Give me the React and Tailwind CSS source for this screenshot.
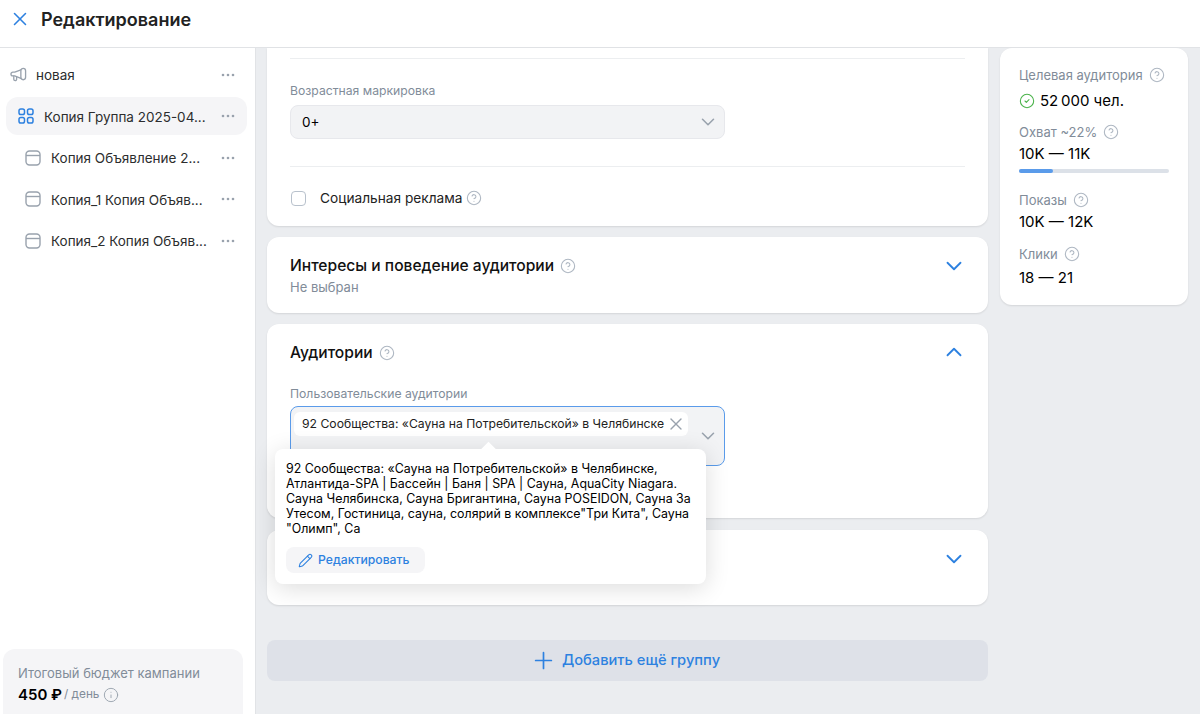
import React from 'react';
import { X, ChevronDown, ChevronUp, CircleHelp, CircleCheck, Pencil, Plus, Info } from 'lucide-react';

const Help = () => (
  <CircleHelp size={16} strokeWidth={1.6} className="text-[#aeb7c2] shrink-0" />
);

const Dots = () => (
  <svg width="14" height="4" viewBox="0 0 14 4" className="text-[#99a2ad] shrink-0" fill="currentColor">
    <circle cx="2" cy="2" r="1.3" />
    <circle cx="7" cy="2" r="1.3" />
    <circle cx="12" cy="2" r="1.3" />
  </svg>
);

const CampaignIcon = () => (
  <svg width="17" height="16" viewBox="0 0 18 16" fill="none" stroke="#99a2ad" strokeWidth="1.4" strokeLinejoin="round" strokeLinecap="round">
    <path d="M11.5 2.5 5 5H3a2 2 0 0 0-2 2v0a2 2 0 0 0 2 2h2l6.5 2.5" />
    <rect x="11.5" y="1" width="5" height="12" rx="2.5" />
    <path d="M4 9v3.5a1.5 1.5 0 0 0 3 0V10" />
  </svg>
);

const GroupIcon = () => (
  <svg width="16" height="16" viewBox="0 0 16 16" fill="none" stroke="#2d81e0" strokeWidth="1.5">
    <rect x="1" y="1" width="5.5" height="5.5" rx="1.8" />
    <rect x="9.5" y="1" width="5.5" height="5.5" rx="1.8" />
    <rect x="1" y="9.5" width="5.5" height="5.5" rx="1.8" />
    <rect x="9.5" y="9.5" width="5.5" height="5.5" rx="1.8" />
  </svg>
);

const AdIcon = () => (
  <svg width="16" height="16" viewBox="0 0 16 16" fill="none" stroke="#99a2ad" strokeWidth="1.4">
    <rect x="1" y="1" width="14" height="14" rx="3.5" />
    <path d="M1 5.5h14" />
  </svg>
);

const TreeRow = ({ icon, title, rowClass }) => (
  <div className={`h-[38px] flex items-center rounded-xl pr-[12px] ${rowClass}`}>
    {icon}
    <span className="flex-1 pt-[1px] text-[13.5px] text-[#2c2d2e] truncate">{title}</span>
    <Dots />
  </div>
);

const Stat = ({ label, value, valueClass }) => (
  <div>
    <div className="flex items-center gap-[6px] text-[13px] leading-[16px] text-[#818c99]">
      {label} <Help />
    </div>
    <div className={`text-[15px] leading-[20px] text-black ${valueClass}`}>{value}</div>
  </div>
);

const App = () => {
  return (
    <div className="w-[1200px] h-[714px] flex flex-col overflow-hidden bg-[#ebedf0] font-['Inter',sans-serif] text-[#000]">
      {/* Top bar */}
      <header className="h-[48px] shrink-0 bg-white border-b border-[#e1e3e6] flex items-center pl-[9px] pb-[9px]">
        <X size={22} strokeWidth={1.7} className="text-[#2d81e0]" />
        <h1 className="ml-[10px] text-[18px] font-semibold text-[#222]">Редактирование</h1>
      </header>

      <div className="flex flex-1 min-h-0">
        {/* Tree */}
        <aside className="w-[256px] shrink-0 bg-white border-r border-[#e1e3e6] flex flex-col justify-between">
          <div className="pt-[7.8px] pl-[6px] pr-[8px] flex flex-col gap-[3.5px]">
            <TreeRow rowClass="pl-[4px] gap-[9px]" icon={<CampaignIcon />} title="новая" />
            <TreeRow rowClass="pl-[12px] gap-[10px] bg-[#f5f5f7]" icon={<GroupIcon />} title="Копия Группа 2025-04..." />
            <TreeRow rowClass="pl-[19px] gap-[10px]" icon={<AdIcon />} title="Копия Объявление 2..." />
            <TreeRow rowClass="pl-[19px] gap-[10px]" icon={<AdIcon />} title="Копия_1 Копия Объяв..." />
            <TreeRow rowClass="pl-[19px] gap-[10px]" icon={<AdIcon />} title="Копия_2 Копия Объяв..." />
          </div>
          <div className="ml-[3px] mr-[12px] h-[65px] bg-[#f5f5f7] rounded-t-xl pl-[15px] pt-[16px]">
            <div className="text-[13px] leading-[16px] text-[#818c99]">Итоговый бюджет кампании</div>
            <div className="mt-[4px] flex items-center">
              <span className="text-[15px] leading-[20px] font-semibold text-black">450 ₽</span>
              <span className="ml-[2px] text-[11.8px] text-[#818c99]">/ день</span>
              <Info size={16} strokeWidth={1.4} className="ml-[4px] text-[#99a2ad]" />
            </div>
          </div>
        </aside>

        {/* Form */}
        <main className="w-[733px] shrink-0 pl-[11px] flex flex-col">
          <section className="w-[721px] h-[178px] shrink-0 bg-white rounded-b-xl shadow-[0_1px_2px_rgba(0,0,0,0.1)] px-[23px] pt-[10px]">
            <div className="h-px bg-[#eceef0]" />
            <div className="mt-[24px] text-[12.2px] leading-[16px] text-[#818c99]">Возрастная маркировка</div>
            <div className="mt-[6px] w-[435px] h-[34px] bg-[#f2f3f5] border border-[#e7e8ec] rounded-lg flex items-center justify-between pl-[11px] pr-[5px]">
              <span className="text-[13.5px] text-black">0+</span>
              <ChevronDown size={22} strokeWidth={1.7} className="text-[#99a2ad]" />
            </div>
            <div className="mt-[27px] h-px bg-[#eceef0]" />
            <div className="mt-[21px] flex items-center">
              <div className="ml-[1px] w-[15px] h-[15px] rounded-[4px] border border-[#b8c1cc]" />
              <span className="ml-[14px] text-[13.7px] text-[#222]">Социальная реклама</span>
              <span className="ml-[4px]"><Help /></span>
            </div>
          </section>

          <section className="mt-[11px] w-[721px] h-[76px] shrink-0 bg-white rounded-xl shadow-[0_1px_2px_rgba(0,0,0,0.1)] pl-[23px] pr-[21px] pt-[18px] flex justify-between">
            <div>
              <div className="flex items-center gap-[6px] text-[15.6px] leading-[21px] font-medium text-[#111]">
                Интересы и поведение аудитории <Help />
              </div>
              <div className="mt-[3px] text-[13px] leading-[16px] text-[#818c99]">Не выбран</div>
            </div>
            <ChevronDown size={26} strokeWidth={1.7} className="text-[#2d81e0] mt-[-2px]" />
          </section>

          <section className="relative z-10 mt-[11px] w-[721px] h-[194px] shrink-0 bg-white rounded-xl shadow-[0_1px_2px_rgba(0,0,0,0.1)] pl-[23px] pr-[21px] pt-[18px]">
            <div className="h-[21px] flex justify-between">
              <div className="flex items-center gap-[6px] text-[15.6px] leading-[21px] font-medium text-[#111]">
                Аудитории <Help />
              </div>
              <ChevronUp size={26} strokeWidth={1.7} className="text-[#2d81e0] mt-[-3px]" />
            </div>
            <div className="mt-[23px] text-[12.2px] leading-[16px] text-[#818c99]">Пользовательские аудитории</div>
            <div className="mt-[4px] w-[435px] h-[60px] bg-[#f2f3f5] border border-[#5a9bea] rounded-lg pl-[3px] pr-[5px] pt-[5px] flex justify-between">
              <div className="w-[394px] h-[24px] bg-white rounded-md flex items-center justify-between pl-[8px] pr-[2px]">
                <span className="text-[12.2px] text-[#222] whitespace-nowrap">92 Сообщества: «Сауна на Потребительской» в Челябинске</span>
                <X size={20} strokeWidth={1.6} className="text-[#99a2ad] shrink-0" />
              </div>
              <ChevronDown size={22} strokeWidth={1.7} className="text-[#99a2ad] mt-[13px]" />
            </div>

            {/* Tooltip over the selected audience */}
            <div className="absolute left-[8px] top-[125px] w-[431px] h-[135px] bg-white rounded-lg shadow-[0_4px_24px_rgba(0,0,0,0.14)] pl-[11px] pt-[12px]">
              <div className="absolute left-[208px] top-[-5px] w-[11px] h-[11px] bg-white rotate-45" />
              <p className="relative w-[415px] text-[12.4px] leading-[15px] text-black">
                92 Сообщества: «Сауна на Потребительской» в Челябинске, Атлантида-SPA | Бассейн | Баня | SPA | Сауна, AquaCity Niagara. Сауна Челябинска, Сауна Бригантина, Сауна POSEIDON, Сауна За Утесом, Гостиница, сауна, солярий в комплексе"Три Кита", Сауна "Олимп", Са
              </p>
              <button className="mt-[11px] h-[26px] w-[139px] bg-[#f5f5f7] rounded-lg flex items-center pl-[12px] text-[#2d81e0]">
                <Pencil size={15} strokeWidth={1.7} />
                <span className="ml-[5px] text-[12.2px] font-medium">Редактировать</span>
              </button>
            </div>
          </section>

          <section className="mt-[12px] w-[721px] h-[75px] shrink-0 bg-white rounded-xl shadow-[0_1px_2px_rgba(0,0,0,0.1)] pr-[21px] pt-[16px] flex justify-end">
            <ChevronDown size={26} strokeWidth={1.7} className="text-[#2d81e0]" />
          </section>

          <button className="mt-[35px] w-[721px] h-[41px] shrink-0 bg-[#dee1e8] rounded-lg flex items-center justify-center pr-[5px] text-[#2d81e0]">
            <Plus size={27} strokeWidth={1.5} />
            <span className="ml-[5px] text-[14.7px] font-medium">Добавить ещё группу</span>
          </button>
        </main>

        {/* Forecast */}
        <div className="w-[188px] ml-[11px]">
          <div className="h-[257px] bg-white rounded-xl shadow-[0_1px_2px_rgba(0,0,0,0.1)] px-[19px] pt-[19px] flex flex-col">
            <Stat label="Целевая аудитория" valueClass="mt-[8px]" value={
              <span className="flex items-center">
                <CircleCheck size={16} strokeWidth={1.6} className="text-[#4bb34b]" />
                <span className="ml-[5px]">52{'\u2009'}000 чел.</span>
              </span>
            } />
            <div className="mt-[13px]">
              <Stat label="Охват ~22%" valueClass="mt-[4px]" value="10K — 11K" />
              <div className="mt-[5px] h-[4px] rounded-full bg-[#dce1e8]">
                <div className="h-full w-[34px] rounded-full bg-[#5a9bea]" />
              </div>
            </div>
            <div className="mt-[19px]"><Stat label="Показы" valueClass="mt-[4px]" value="10K — 12K" /></div>
            <div className="mt-[14px]"><Stat label="Клики" valueClass="mt-[6px]" value="18 — 21" /></div>
          </div>
        </div>
      </div>
    </div>
  );
};

export default App;
